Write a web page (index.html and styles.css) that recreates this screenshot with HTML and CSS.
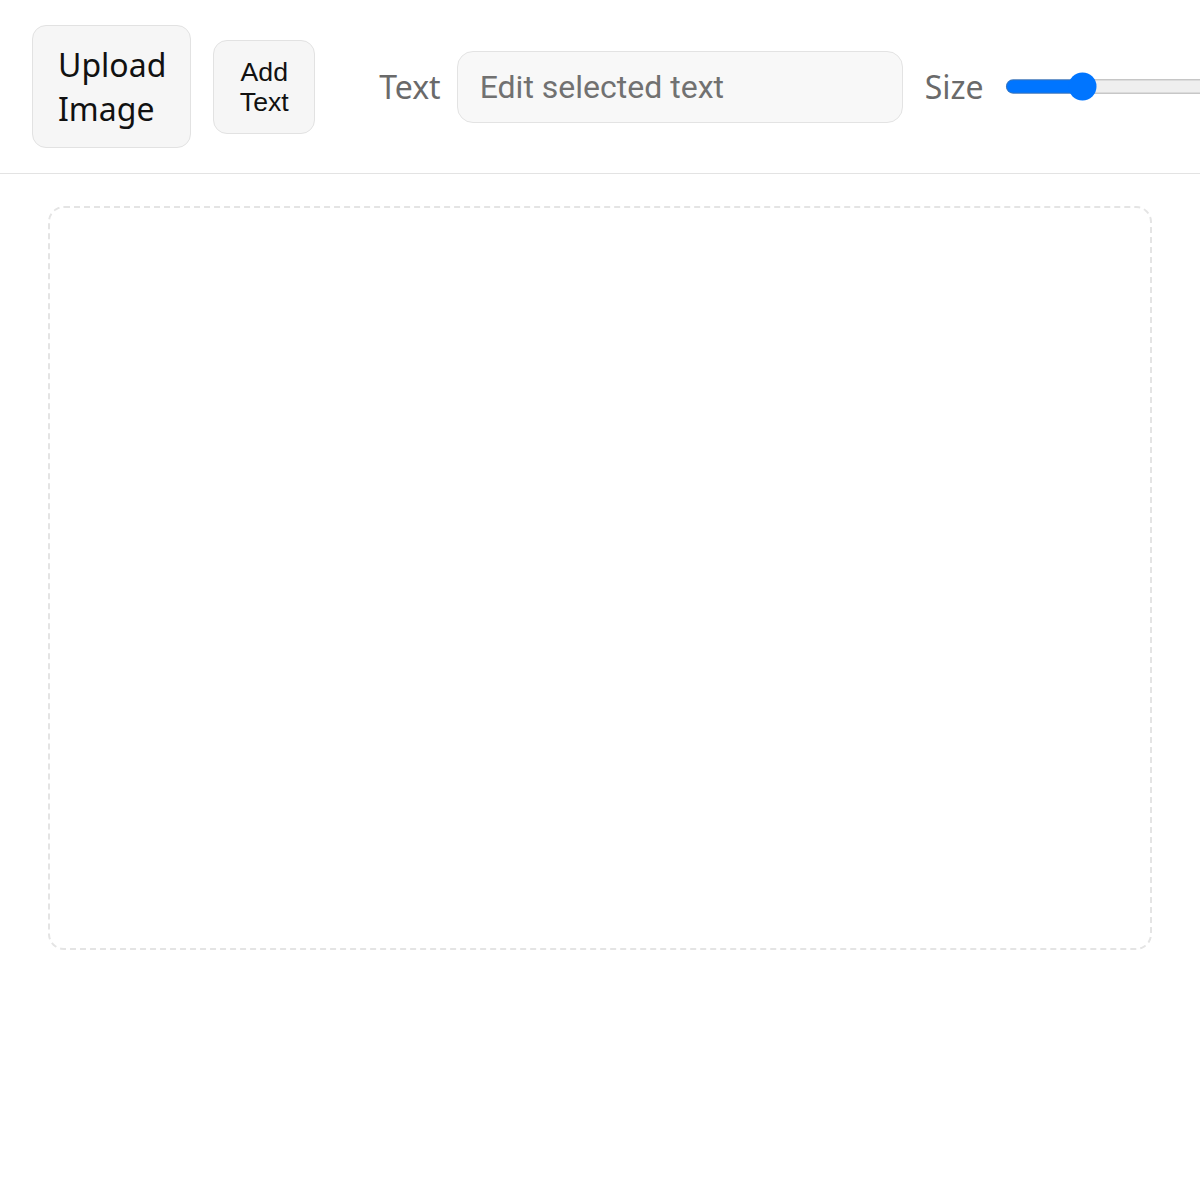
FILE: index.html
```html
<!DOCTYPE html>
<html lang="en">
<head>
<meta charset="utf-8">
<title>Image Text Editor</title>
<link rel="stylesheet" href="styles.css">
</head>
<body>
<div class="toolbar">
  <button class="btn btn-upload" type="button">Upload Image</button>
  <button class="btn btn-add" type="button">Add Text</button>
  <label class="field-label label-text" for="text-input">Text</label>
  <input id="text-input" class="text-input" type="text" placeholder="Edit selected text">
  <label class="field-label label-size" for="size-input">Size</label>
  <input id="size-input" class="size-range" type="range" min="0" max="100" value="31">
</div>
<main class="workspace">
  <div class="canvas-area"></div>
</main>
</body>
</html>
```
FILE: styles.css
```css
html, body {
  margin: 0;
  padding: 0;
  background: #ffffff;
}

body {
  font-family: "Noto Sans", "Open Sans", sans-serif;
  overflow: hidden;
}

.toolbar {
  display: flex;
  align-items: center;
  height: 174px;
  box-sizing: border-box;
  padding: 0 0 0 32px;
  border-bottom: 1px solid #e3e3e3;
  white-space: nowrap;
}

.btn {
  flex-shrink: 0;
  width: min-content;
  white-space: normal;
  background: #f6f6f6;
  border: 1px solid #e2e2e2;
  border-radius: 14px;
  padding: 16px 24px;
  color: #111111;
  text-align: left;
  cursor: pointer;
}

.btn-upload {
  font-family: "Noto Sans", sans-serif;
  font-size: 32px;
  line-height: 44px;
  padding-left: 25px;
  padding-top: 16.5px;
  padding-bottom: 16.5px;
}

.btn-add {
  margin-left: 22px;
  padding-left: 25.5px;
  padding-right: 25.5px;
  font-family: "Liberation Sans", Arial, sans-serif;
  font-size: 26.67px;
  line-height: 30px;
  text-align: center;
}

.field-label {
  flex-shrink: 0;
  font-family: "Noto Sans", sans-serif;
  font-size: 32px;
  color: #6a6a6a;
}

.label-text {
  margin-left: 64px;
}

.text-input {
  flex-shrink: 0;
  width: 446px;
  height: 72px;
  box-sizing: border-box;
  margin-left: 16px;
  padding: 0 22px;
  border: 1px solid #e3e3e3;
  border-radius: 16px;
  background: #f8f8f8;
  font-family: Roboto, sans-serif;
  font-size: 32px;
  color: #333333;
  outline: none;
}

.text-input::placeholder {
  color: #717171;
}

.label-size {
  margin-left: 22px;
}

.size-range {
  flex-shrink: 0;
  margin: 0 0 0 12px;
  zoom: 1.8;
}

.workspace {
  padding: 32px 48px 0 48px;
}

.canvas-area {
  height: 744px;
  box-sizing: border-box;
  border: 2px dashed #e4e4e4;
  border-radius: 16px;
}
```
